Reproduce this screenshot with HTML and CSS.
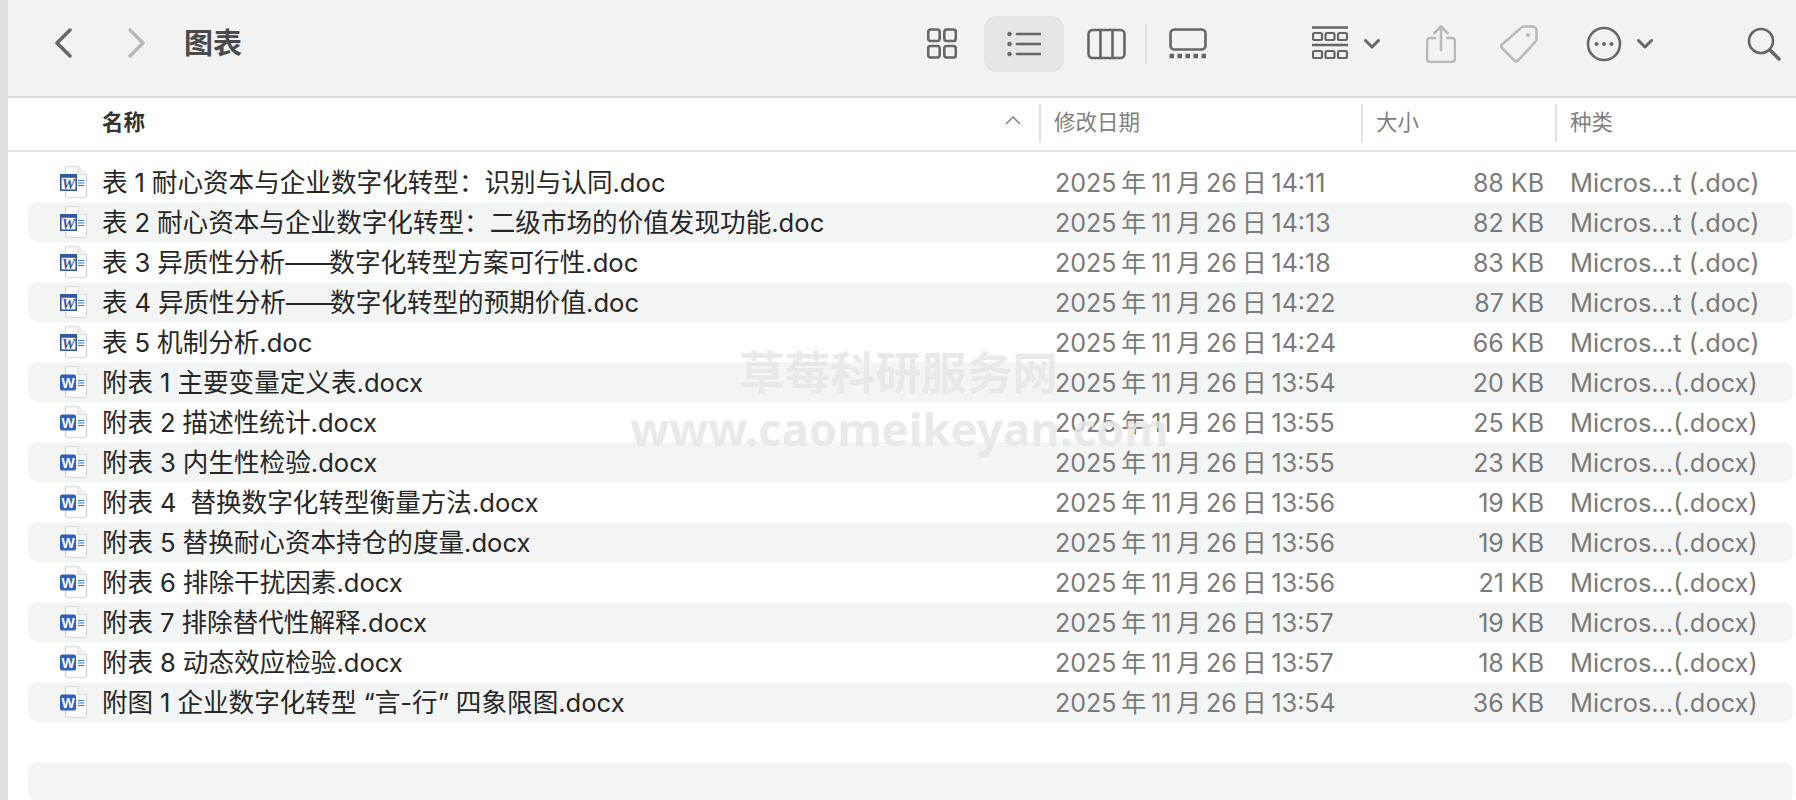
FILE: index.html
```html
<!DOCTYPE html>
<html lang="zh">
<head>
  <meta charset="utf-8">
  <title>图表</title>
  <link rel="stylesheet" href="styles.css">
</head>
<body>
  <!-- file icons, used by every row -->
  <svg class="defs" width="0" height="0">
    <symbol id="doc-old" viewBox="0 0 28 32">
      <path d="M5.500 .7H18L26.500 8.500V30a1.300 1.300 0 0 1-1.300 1.300H6.800A1.300 1.300 0 0 1 5.500 30Z" fill="#fff" stroke="#d4d4d4"/>
      <path d="M18 .7V8.500H26.500" fill="#f1f1f1" stroke="#dcdcdc"/>
      <rect x=".8" y="8.800" width="15.400" height="15.400" fill="#fff" stroke="#34589f" stroke-width="1.600"/>
      <rect x=".8" y="8.800" width="15.400" height="3" fill="#34589f"/>
      <text x="8.500" y="22.500" class="doc-w doc-w-old">W</text>
      <path d="M18 14.500h6.500M18 17h6.500M18 19.500h6.500" stroke="#3f78dc" stroke-width="1.200"/>
    </symbol>
    <symbol id="doc-new" viewBox="0 0 28 32">
      <path d="M5.500 .7H18L26.500 8.500V30a1.300 1.300 0 0 1-1.300 1.300H6.800A1.300 1.300 0 0 1 5.500 30Z" fill="#fff" stroke="#d4d4d4"/>
      <path d="M18 .7V8.500H26.500" fill="#f1f1f1" stroke="#dcdcdc"/>
      <rect x="0" y="8.500" width="16" height="16" rx="2" fill="#2f5fbf"/>
      <text x="8" y="21.700" class="doc-w">W</text>
      <path d="M18 14.500h6.500M18 17h6.500M18 19.500h6.500" stroke="#3f78dc" stroke-width="1.200"/>
    </symbol>
  </svg>

  <div class="window">
    <div class="toolbar">
      <svg class="tb-back" width="18" height="30" viewBox="0 0 18 30"><path d="M16 2 3 15l13 13" class="ic"/></svg>
      <svg class="tb-forward" width="18" height="30" viewBox="0 0 18 30"><path d="M2 2l13 13L2 28" class="ic ic-off"/></svg>
      <div class="title">图表</div>

      <svg class="tb-grid" width="30" height="32" viewBox="0 0 30 32">
        <g class="ic ic-thin"><rect x="1.200" y="1.500" width="11.500" height="11.500" rx="2.500"/><rect x="17.300" y="1.500" width="11.500" height="11.500" rx="2.500"/><rect x="1.200" y="18" width="11.500" height="11.500" rx="2.500"/><rect x="17.300" y="18" width="11.500" height="11.500" rx="2.500"/></g>
      </svg>
      <div class="tb-active">
        <svg width="34" height="26" viewBox="0 0 34 26">
          <g fill="#666"><circle cx="2.500" cy="3" r="2.200"/><circle cx="2.500" cy="13" r="2.200"/><circle cx="2.500" cy="23" r="2.200"/></g>
          <path d="M10 3h23.500M10 13h23.500M10 23h23.500" class="ic ic-thin"/>
        </svg>
      </div>
      <svg class="tb-cols" width="39" height="32" viewBox="0 0 39 32">
        <g class="ic ic-thin"><rect x="1.500" y="2" width="36" height="28" rx="4"/><path d="M13.500 2v28M25.500 2v28"/></g>
      </svg>
      <div class="tb-divider"></div>
      <svg class="tb-gallery" width="38" height="32" viewBox="0 0 38 32">
        <rect x="1.500" y="1.500" width="35" height="20" rx="4" class="ic ic-thin"/>
        <path d="M.5 28h37" stroke="#666" stroke-width="4.500" stroke-dasharray="4.500 3.500" fill="none"/>
      </svg>

      <svg class="tb-group" width="36" height="36" viewBox="0 0 36 36">
        <path d="M0 1.500h36M0 19h36" class="ic ic-thin"/>
        <g class="ic ic-mid"><rect x="1" y="7" width="9" height="7" rx="1.500"/><rect x="13.500" y="7" width="9" height="7" rx="1.500"/><rect x="26" y="7" width="9" height="7" rx="1.500"/><rect x="1" y="25" width="9" height="7" rx="1.500"/><rect x="13.500" y="25" width="9" height="7" rx="1.500"/><rect x="26" y="25" width="9" height="7" rx="1.500"/></g>
      </svg>
      <svg class="tb-chev" width="16" height="10" viewBox="0 0 16 10"><path d="M1.500 1.500 8 8l6.500-6.500" class="ic ic-chev"/></svg>
      <svg class="tb-share" width="30" height="38" viewBox="0 0 30 38">
        <g class="ic ic-off ic-thin"><path d="M9 13H4a3 3 0 0 0-3 3v18a3 3 0 0 0 3 3h22a3 3 0 0 0 3-3V16a3 3 0 0 0-3-3h-5"/><path d="M15 25V2M8.500 8 15 1.500 21.500 8"/></g>
      </svg>
      <svg class="tb-tag" width="38" height="38" viewBox="0 0 38 38">
        <path d="M24 1.500h8.500a4 4 0 0 1 4 4V14a4 4 0 0 1-1.200 2.800L18 35.500a2.500 2.500 0 0 1-3.500 0L2 23a2.500 2.500 0 0 1 0-3.500L21.200 2.700A4 4 0 0 1 24 1.500Z" class="ic ic-off ic-thin"/>
        <circle cx="28" cy="10" r="2" fill="#b8b8b8"/>
      </svg>
      <svg class="tb-more" width="36" height="36" viewBox="0 0 36 36">
        <circle cx="18" cy="18" r="16" class="ic ic-thin"/>
        <g fill="#666"><circle cx="10.500" cy="18" r="2"/><circle cx="18" cy="18" r="2"/><circle cx="25.500" cy="18" r="2"/></g>
      </svg>
      <svg class="tb-chev2" width="16" height="10" viewBox="0 0 16 10"><path d="M1.500 1.500 8 8l6.500-6.500" class="ic ic-chev"/></svg>
      <svg class="tb-search" width="34" height="34" viewBox="0 0 34 34">
        <circle cx="14" cy="14" r="12" class="ic ic-thin"/><path d="M23 23l9 9" class="ic"/>
      </svg>
    </div>

    <div class="list-head">
      <div class="hd-name">名称
        <svg class="sort" width="16" height="9" viewBox="0 0 16 9"><path d="M1 8l7-7 7 7" fill="none" stroke="#808080" stroke-width="1.500"/></svg>
      </div>
      <div class="hd-col hd-date">修改日期</div>
      <div class="hd-col hd-size">大小</div>
      <div class="hd-col hd-kind">种类</div>
    </div>

    <div class="list">
      <div class="row"><svg class="file-ic"><use href="#doc-old"/></svg><span class="name">表 1 耐心资本与企业数字化转型：识别与认同.doc</span><span class="date">2025 年 11 月 26 日 14:11</span><span class="size">88 KB</span><span class="kind">Micros…t (.doc)</span></div>
      <div class="row"><svg class="file-ic"><use href="#doc-old"/></svg><span class="name">表 2 耐心资本与企业数字化转型：二级市场的价值发现功能.doc</span><span class="date">2025 年 11 月 26 日 14:13</span><span class="size">82 KB</span><span class="kind">Micros…t (.doc)</span></div>
      <div class="row"><svg class="file-ic"><use href="#doc-old"/></svg><span class="name">表 3 异质性分析<span class="dash">——</span>数字化转型方案可行性.doc</span><span class="date">2025 年 11 月 26 日 14:18</span><span class="size">83 KB</span><span class="kind">Micros…t (.doc)</span></div>
      <div class="row"><svg class="file-ic"><use href="#doc-old"/></svg><span class="name">表 4 异质性分析<span class="dash">——</span>数字化转型的预期价值.doc</span><span class="date">2025 年 11 月 26 日 14:22</span><span class="size">87 KB</span><span class="kind">Micros…t (.doc)</span></div>
      <div class="row"><svg class="file-ic"><use href="#doc-old"/></svg><span class="name">表 5 机制分析.doc</span><span class="date">2025 年 11 月 26 日 14:24</span><span class="size">66 KB</span><span class="kind">Micros…t (.doc)</span></div>
      <div class="row"><svg class="file-ic"><use href="#doc-new"/></svg><span class="name">附表 1 主要变量定义表.docx</span><span class="date">2025 年 11 月 26 日 13:54</span><span class="size">20 KB</span><span class="kind">Micros…(.docx)</span></div>
      <div class="row"><svg class="file-ic"><use href="#doc-new"/></svg><span class="name">附表 2 描述性统计.docx</span><span class="date">2025 年 11 月 26 日 13:55</span><span class="size">25 KB</span><span class="kind">Micros…(.docx)</span></div>
      <div class="row"><svg class="file-ic"><use href="#doc-new"/></svg><span class="name">附表 3 内生性检验.docx</span><span class="date">2025 年 11 月 26 日 13:55</span><span class="size">23 KB</span><span class="kind">Micros…(.docx)</span></div>
      <div class="row"><svg class="file-ic"><use href="#doc-new"/></svg><span class="name">附表 4 &nbsp;替换数字化转型衡量方法.docx</span><span class="date">2025 年 11 月 26 日 13:56</span><span class="size">19 KB</span><span class="kind">Micros…(.docx)</span></div>
      <div class="row"><svg class="file-ic"><use href="#doc-new"/></svg><span class="name">附表 5 替换耐心资本持仓的度量.docx</span><span class="date">2025 年 11 月 26 日 13:56</span><span class="size">19 KB</span><span class="kind">Micros…(.docx)</span></div>
      <div class="row"><svg class="file-ic"><use href="#doc-new"/></svg><span class="name">附表 6 排除干扰因素.docx</span><span class="date">2025 年 11 月 26 日 13:56</span><span class="size">21 KB</span><span class="kind">Micros…(.docx)</span></div>
      <div class="row"><svg class="file-ic"><use href="#doc-new"/></svg><span class="name">附表 7 排除替代性解释.docx</span><span class="date">2025 年 11 月 26 日 13:57</span><span class="size">19 KB</span><span class="kind">Micros…(.docx)</span></div>
      <div class="row"><svg class="file-ic"><use href="#doc-new"/></svg><span class="name">附表 8 动态效应检验.docx</span><span class="date">2025 年 11 月 26 日 13:57</span><span class="size">18 KB</span><span class="kind">Micros…(.docx)</span></div>
      <div class="row"><svg class="file-ic"><use href="#doc-new"/></svg><span class="name">附图 1 企业数字化转型 “言-行” 四象限图.docx</span><span class="date">2025 年 11 月 26 日 13:54</span><span class="size">36 KB</span><span class="kind">Micros…(.docx)</span></div>
      <div class="row row-empty"></div>
      <div class="row row-empty"></div>
    </div>

    <div class="watermark">
      <div class="wm-cn">草莓科研服务网</div>
      <div class="wm-en">www.caomeikeyan.com</div>
    </div>
  </div>
</body>
</html>
```

FILE: styles.css
```css
html, body {
  margin: 0;
  height: 800px;
  overflow: hidden;
}
body {
  background: #e0dfdd;
  font-family: Inter, "Noto Sans CJK SC", sans-serif;
}
.defs {
  position: absolute;
}
.window {
  position: relative;
  margin-left: 8px;
  height: 800px;
  background: #fff;
  overflow: hidden;
}

/* toolbar */
.toolbar {
  display: flex;
  align-items: center;
  height: 98px;
  padding-bottom: 8px;
  box-sizing: border-box;
  background: #f2f2f2;
  border-bottom: 2px solid #dcdcdc;
}
.ic {
  fill: none;
  stroke: #666;
  stroke-width: 3.5;
  stroke-linecap: round;
  stroke-linejoin: round;
}
.ic-thin {
  stroke-width: 2.6;
}
.ic-mid {
  stroke-width: 2.2;
}
.ic-chev {
  stroke-width: 3;
}
.ic-off {
  stroke: #b8b8b8;
}
.tb-back {
  margin-left: 46px;
  margin-bottom: 2px;
}
.tb-forward {
  margin-left: 56px;
  margin-bottom: 2px;
}
.title {
  margin-left: 38px;
  width: 743px;
  padding-bottom: 6px;
  font-size: 29px;
  font-weight: 700;
  color: #4a4a4a;
}
.tb-active {
  display: flex;
  align-items: center;
  justify-content: center;
  width: 80px;
  height: 56px;
  margin-left: 27px;
  border-radius: 12px;
  background: #e5e5e5;
}
.tb-cols {
  margin-left: 23px;
}
.tb-divider {
  width: 2px;
  height: 40px;
  margin-left: 19px;
  background: #e2e2e2;
}
.tb-gallery {
  margin-left: 22px;
}
.tb-group {
  margin-left: 105px;
}
.tb-chev {
  margin-left: 16px;
}
.tb-share {
  margin-left: 46px;
}
.tb-tag {
  margin-left: 44px;
}
.tb-more {
  margin-left: 48px;
}
.tb-chev2 {
  margin-left: 15px;
}
.tb-search {
  margin-left: 94px;
}

/* column headers */
.list-head {
  display: grid;
  grid-template-columns: 1031px 322px 194px 1fr;
  height: 54px;
  padding-bottom: 8px;
  box-sizing: border-box;
  border-bottom: 2px solid #e2e2e2;
  font-size: 21.5px;
  color: #808080;
}
.hd-name {
  display: flex;
  align-items: center;
  justify-content: space-between;
  padding: 0 18px 0 94px;
  font-weight: 700;
  color: #333;
}
.hd-col {
  display: flex;
  align-items: center;
  position: relative;
  padding-left: 15px;
}
.hd-col::before {
  content: "";
  position: absolute;
  left: 0;
  top: 6px;
  bottom: 0;
  width: 2px;
  background: #e2e2e2;
}

/* file rows */
.list {
  padding: 10px 3px 0 20px;
}
.row {
  display: grid;
  grid-template-columns: 74px 953px 345px 144px 1fr;
  align-items: baseline;
  height: 40px;
  font-size: 25px;
  color: #262626;
  white-space: nowrap;
}
.row:nth-child(even) {
  background: #f3f5f5;
  border-radius: 10px;
}
.file-ic {
  align-self: center;
  width: 28px;
  height: 32px;
  margin-left: 32px;
}
.doc-w {
  font-family: "Liberation Sans", sans-serif;
  font-size: 14px;
  font-weight: 700;
  fill: #fff;
  text-anchor: middle;
}
.doc-w-old {
  font-family: "Liberation Serif", serif;
  font-size: 15px;
  font-style: italic;
  fill: #34589f;
}
.name {
  font-size: 25.6px;
  word-spacing: -0.3px;
}
.dash {
  letter-spacing: -3.5px;
}
.date, .size, .kind {
  color: #7a7a7a;
}
.date {
  word-spacing: -2.2px;
}
.size {
  text-align: right;
}
.kind {
  padding-left: 26px;
  font-size: 25.4px;
}

/* site watermark, lies over the list */
.watermark {
  position: absolute;
  left: 624px;
  top: 344px;
  width: 535px;
  text-align: center;
  font-weight: 700;
  font-family: "Noto Sans", "Noto Sans CJK SC", sans-serif;
  color: rgba(230, 230, 230, 0.85);
  pointer-events: none;
}
.wm-cn {
  margin-right: 2px;
  font-size: 45.5px;
  line-height: 56px;
}
.wm-en {
  margin-left: -20px;
  margin-right: -20px;
  font-size: 45.5px;
  line-height: 56px;
  white-space: nowrap;
}
```
